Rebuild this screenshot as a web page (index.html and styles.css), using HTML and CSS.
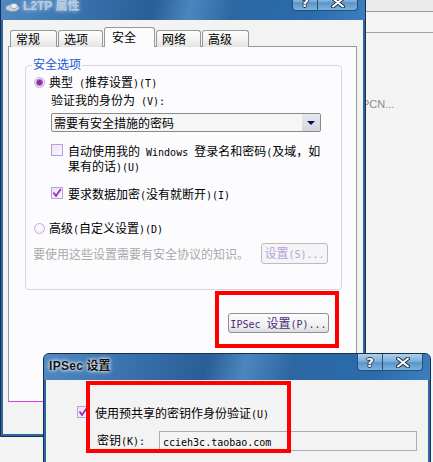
FILE: index.html
```html
<!DOCTYPE html>
<html lang="zh-CN">
<head>
  <meta charset="UTF-8">
  <title>L2TP 属性</title>
  <link rel="stylesheet" href="styles.css">
</head>
<body>
  <!-- window behind the dialogs -->
  <div class="backdrop">
    <div class="bk-strip"></div>
    <div class="bk-row"></div>
    <div class="bk-item">PCN...</div>
  </div>

  <!-- L2TP properties -->
  <div class="win win-main">
    <div class="titlebar">
      <svg class="app-icon" width="15" height="10" viewBox="0 0 15 10">
        <ellipse cx="7.5" cy="6" rx="6.8" ry="3.4" fill="#c9d3dc" stroke="#8d9aa6" stroke-width="0.8"/>
        <ellipse cx="9" cy="4" rx="3.6" ry="2.6" fill="#e9eef2" stroke="#8d9aa6" stroke-width="0.8"/>
      </svg>
      <span class="title inactive">L2TP 属性</span>
      <div class="caption">
        <span class="cap help">?</span>
        <span class="cap close">
          <svg width="14" height="11" viewBox="0 0 14 11">
            <path d="M2 1.5 L12 9.5 M12 1.5 L2 9.5" stroke="#23364f" stroke-width="4" stroke-linecap="round"/>
            <path d="M2 1.5 L12 9.5 M12 1.5 L2 9.5" stroke="#fff" stroke-width="2" stroke-linecap="round"/>
          </svg>
        </span>
      </div>
    </div>
    <div class="win-body">
      <div class="tabs">
        <div class="tab">常规</div>
        <div class="tab">选项</div>
        <div class="tab sel">安全</div>
        <div class="tab">网络</div>
        <div class="tab">高级</div>
      </div>
      <div class="panel">
        <div class="group">
          <span class="legend">安全选项</span>
          <div class="opt">
            <span class="radio on"></span>
            <span>典型<span class="en"> (</span>推荐设置<span class="en">)(T)</span></span>
          </div>
          <div class="field-label">验证我的身份为<span class="en"> (V):</span></div>
          <div class="select">
            <span class="select-text">需要有安全措施的密码</span>
            <span class="select-arrow"></span>
          </div>
          <div class="chk-row first">
            <span class="check"></span>
            <span class="chk-text">自动使用我的<span class="en"> Windows </span>登录名和密码<span class="en">(</span>及域，如<br>果有的话<span class="en">)(U)</span></span>
          </div>
          <div class="chk-row second">
            <span class="check on">
              <svg width="10" height="10" viewBox="0 0 10 10"><path d="M1.5 4.5 L4 8 L8.8 1" fill="none" stroke="#9a2eb0" stroke-width="1.8"/></svg>
            </span>
            <span class="chk-text">要求数据加密<span class="en">(</span>没有就断开<span class="en">)(I)</span></span>
          </div>
          <div class="opt adv">
            <span class="radio"></span>
            <span>高级<span class="en">(</span>自定义设置<span class="en">)(D)</span></span>
          </div>
          <div class="hint-row">
            <span class="hint">要使用这些设置需要有安全协议的知识。</span>
            <button class="btn disabled">设置<span class="en">(S)...</span></button>
          </div>
        </div>
        <div class="mark mark-ipsec">
          <button class="btn ipsec"><span class="en">IPSec </span>设置<span class="en">(P)...</span></button>
        </div>
      </div>
    </div>
  </div>

  <!-- IPSec settings -->
  <div class="win win-ipsec">
    <div class="titlebar">
      <span class="title active"><span class="tt-en">IPSec</span> 设置</span>
      <div class="caption">
        <span class="cap help">?</span>
        <span class="cap close">
          <svg width="14" height="11" viewBox="0 0 14 11">
            <path d="M2 1.5 L12 9.5 M12 1.5 L2 9.5" stroke="#23364f" stroke-width="4" stroke-linecap="round"/>
            <path d="M2 1.5 L12 9.5 M12 1.5 L2 9.5" stroke="#fff" stroke-width="2" stroke-linecap="round"/>
          </svg>
        </span>
      </div>
    </div>
    <div class="win-body ipsec-body">
      <div class="chk-row psk">
        <span class="check on">
          <svg width="10" height="10" viewBox="0 0 10 10"><path d="M1.5 4.5 L4 8 L8.8 1" fill="none" stroke="#9a2eb0" stroke-width="1.8"/></svg>
        </span>
        <span class="chk-text">使用预共享的密钥作身份验证<span class="en">(U)</span></span>
      </div>
      <div class="key-row">
        <span class="key-label">密钥<span class="en">(K):</span></span>
        <div class="input"><span class="en">ccieh3c.taobao.com</span></div>
      </div>
    </div>
    <div class="mark mark-key"></div>
  </div>
</body>
</html>
```

FILE: styles.css
```css
* { box-sizing: border-box; }

html, body { margin: 0; }

body {
  width: 433px;
  height: 462px;
  overflow: hidden;
  position: relative;
  background: #f3f3f3;
  font: 12px/13px "Noto Sans CJK SC", sans-serif;
  color: #000;
}

.en {
  font-family: "DejaVu Sans Mono", monospace;
  font-size: 10px;
}

/* window behind */
.bk-strip {
  height: 12px;
  background: #ebebeb;
  border-bottom: 1px solid #9c9c9c;
}
.bk-row {
  height: 21px;
  background: #f5f5f5;
  border-bottom: 1px solid #a2a2a2;
}
.bk-item {
  margin: 65px 0 0 362px;
  color: #8a8a8a;
  font: 11px/13px "Liberation Sans", sans-serif;
}

/* windows */
.win {
  position: absolute;
  display: flex;
  flex-direction: column;
  background: #2f65a0;
  border: 1px solid #16304f;
  border-radius: 6px 6px 0 0;
}
.win-main { left: 0; top: -7px; width: 366px; height: 444px; }
.win-ipsec { left: 43px; top: 353px; width: 388px; height: 130px; }

.titlebar {
  height: 26px;
  flex: none;
  display: flex;
  align-items: center;
  padding-left: 4px;
  border-radius: 5px 5px 0 0;
  background: linear-gradient(105deg, #5089c2 0%, #3a72ad 22%, #295e98 42%, #4c86bf 52%, #2c67a3 64%, #2a6cab 85%, #3b7fbe 100%);
}
.win-ipsec .titlebar { padding-left: 5px; }

.app-icon { margin: 0 3px 1px 0; }

.title {
  font: bold 12px/14px "Liberation Sans", "Noto Sans CJK SC", sans-serif;
  padding-bottom: 2px;
}
.title.inactive {
  color: #b9cde1;
  text-shadow: 0 0 4px rgba(230, 240, 250, 0.9);
}
.title.active {
  color: #141414;
  text-shadow: 0 0 5px #fff, 0 0 3px #fff;
}
.tt-en { letter-spacing: 0.3px; }

.caption {
  display: flex;
  align-self: flex-start;
  margin-left: auto;
  margin-right: 7px;
}
.cap {
  height: 17px;
  display: flex;
  align-items: center;
  justify-content: center;
  border: 1px solid #2a4b74;
  border-top: none;
  background: linear-gradient(#b1d0ea, #7eb0d9 45%, #5a95c8 55%, #7cb4df);
}
.cap.help {
  width: 25px;
  border-radius: 0 0 0 4px;
  border-right: none;
  color: #fff;
  font: bold 13px/15px "DejaVu Sans", sans-serif;
  text-shadow: 1px 0 #23364f, -1px 0 #23364f, 0 1px #23364f, 0 -1px #23364f;
}
.cap.close {
  width: 41px;
  border-radius: 0 0 4px 0;
}

.win-body {
  flex: 1;
  margin: 0 2px 2px;
  background: #f3f3f3;
  padding: 7px 6px 0 5px;
}

/* tabs */
.tabs {
  display: flex;
  align-items: flex-end;
  height: 20px;
  padding-left: 2px;
  margin-bottom: -1px;
  position: relative;
  z-index: 1;
}
.tab {
  width: 45px;
  height: 17px;
  margin-left: 1px;
  padding-left: 5px;
  line-height: 16px;
  border: 1px solid #919b9c;
  border-bottom: none;
  border-radius: 3px 3px 0 0;
  background: linear-gradient(#fefefe, #f0f0ef 60%, #e3e3e2);
}
.tab:first-child { margin-left: 0; width: 47px; }
.tab:last-child { width: 47px; }
.tab.sel {
  width: 51px;
  height: 20px;
  padding-left: 7px;
  line-height: 18px;
  background: #fcfcfe;
}

.panel {
  height: 356px;
  display: flex;
  flex-direction: column;
  border: 1px solid #919b9c;
  border-bottom-color: #e03ce0;
  background: #fcfcfe;
}

/* group box */
.group {
  position: relative;
  margin: 18px 14px 0 16px;
  padding: 8px 13px 25px 8px;
  border: 1px solid #d0d8e2;
  border-radius: 4px;
}
.legend {
  position: absolute;
  top: -8px;
  left: 6px;
  padding: 0 1px;
  line-height: 12px;
  background: #fcfcfe;
  color: #1b55d2;
}

.opt {
  display: flex;
  align-items: center;
  height: 16px;
  gap: 4px;
}
.opt.adv { margin-top: 18px; }

.radio {
  width: 11px;
  height: 11px;
  flex: none;
  border-radius: 50%;
  border: 1px solid #c6a9e6;
  background: radial-gradient(circle at 40% 40%, #fff, #f0e8fa);
}
.radio.on {
  background: radial-gradient(circle, #8c2ca0 0 2px, #b566c6 3px, #efe4f8 4px);
}

.field-label {
  height: 16px;
  line-height: 16px;
  margin: 2px 0 0 17px;
}

.select {
  display: flex;
  width: 270px;
  height: 19px;
  margin: 5px 0 0 17px;
  border: 1px solid #8a8a8a;
  border-radius: 2px;
  background: #f6f6f6;
}
.select-text {
  flex: 1;
  padding-left: 2px;
  line-height: 17px;
}
.select-arrow {
  width: 18px;
  display: flex;
  align-items: center;
  justify-content: center;
  background: linear-gradient(#e8e8ef, #d5d5de);
}
.select-arrow::after {
  content: "";
  border-left: 4px solid transparent;
  border-right: 4px solid transparent;
  border-top: 4px solid #0b0b5c;
}

.chk-row {
  display: flex;
  align-items: flex-start;
  gap: 5px;
  margin-left: 17px;
}
.chk-row.first { margin-top: 12px; }
.chk-row.second { margin-top: 13px; }
.chk-text { white-space: nowrap; line-height: 13px; }

.check {
  width: 12px;
  height: 12px;
  flex: none;
  display: flex;
  align-items: center;
  justify-content: center;
  border: 1px solid #bb9de0;
  background: linear-gradient(135deg, #ebe1f7, #fbf8ff);
}

.hint-row {
  display: flex;
  align-items: center;
  justify-content: space-between;
  margin-top: 7px;
}
.hint { color: #a9a9a9; margin-left: -1px; }

.btn {
  font: inherit;
  padding: 0;
  height: 21px;
  border: 1px solid #8f8f8f;
  border-radius: 3px;
  background: linear-gradient(#fefefe, #efefef 70%, #dcdcdc);
}
.btn.disabled {
  width: 67px;
  color: #b6a3d8;
  border-color: #bcbcbc;
  background: #f5f4f6;
}
.btn.ipsec {
  width: 101px;
  height: 20px;
  color: #4b2c7e;
}

/* red annotation frames */
.mark { border: 4px solid #ff0000; }
.mark-ipsec {
  display: flex;
  align-items: flex-start;
  width: 124px;
  height: 57px;
  margin: 1px 17px 0 auto;
  padding: 18px 0 0 9px;
}
.mark-key {
  position: absolute;
  left: 42px;
  top: 27px;
  width: 205px;
  height: 72px;
}

/* IPSec body */
.ipsec-body { padding: 26px 0 0; }
.chk-row.psk { margin-left: 31px; gap: 6px; }
.key-row {
  display: flex;
  align-items: flex-start;
  margin: 10px 0 0 51px;
}
.key-label { width: 62px; padding-top: 2px; }
.input {
  width: 258px;
  height: 20px;
  padding-left: 3px;
  line-height: 18px;
  border: 1px solid #a7aeb6;
  background: #f4f4f4;
}
```
